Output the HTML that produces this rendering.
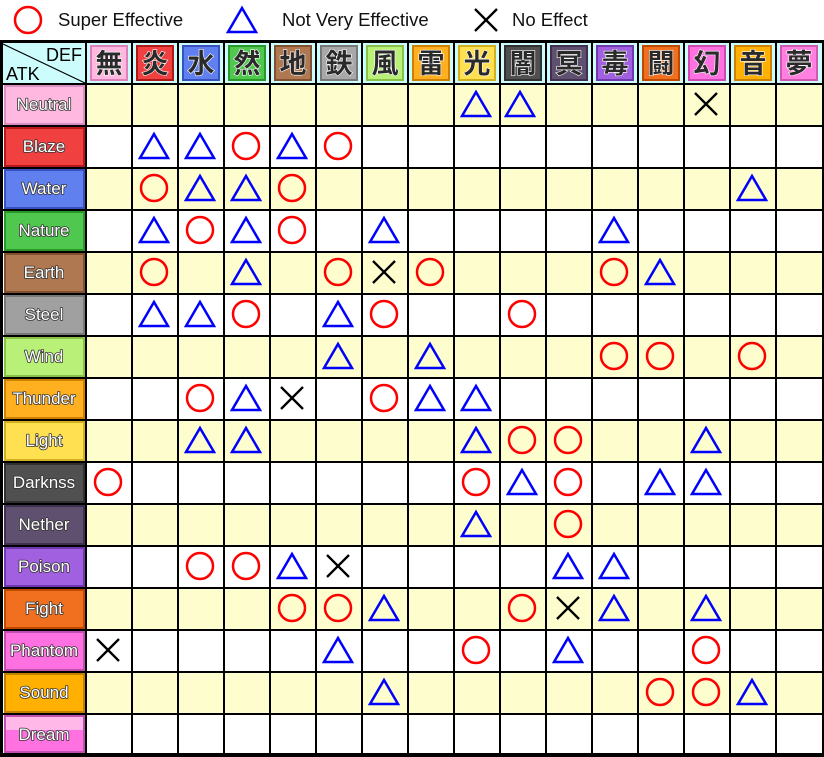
<!DOCTYPE html>
<html><head><meta charset="utf-8"><style>
html,body{margin:0;padding:0;background:#fff;width:824px;height:757px;overflow:hidden}
svg{display:block}
text{font-family:"Liberation Sans","Noto Sans CJK JP",sans-serif}
.lb{font-size:17px;fill:#fff;text-anchor:middle;stroke:#333;stroke-width:1.6;paint-order:stroke;stroke-linejoin:round}
.kj{font-family:"Noto Sans CJK JP","WenQuanYi Zen Hei",sans-serif;font-size:27px;font-weight:bold;text-anchor:middle;fill:#2a2a2a;stroke:#fff;stroke-width:1.2;paint-order:stroke}
</style></head><body>
<svg width="824" height="757" viewBox="0 0 824 757" xmlns="http://www.w3.org/2000/svg">
<defs>
<circle id="o" r="13" fill="none" stroke="#f00" stroke-width="2.5"/>
<polygon id="t" points="0,-13 14,11 -14,11" fill="none" stroke="#00f" stroke-width="2.5" stroke-linejoin="miter"/>
<g id="x" stroke="#000" stroke-width="2.3"><line x1="-11" y1="-11" x2="11" y2="11"/><line x1="11" y1="-11" x2="-11" y2="11"/></g>
</defs>
<use href="#o" x="28" y="20"/>
<text x="58" y="26" font-size="18.5" fill="#111">Super Effective</text>
<use href="#t" x="242" y="21"/>
<text x="282" y="26" font-size="18.5" fill="#111">Not Very Effective</text>
<use href="#x" x="486" y="20"/>
<text x="512" y="26" font-size="18.5" fill="#111">No Effect</text>
<rect x="0" y="40" width="824" height="717" fill="#000"/>
<rect x="3" y="43" width="819" height="710" fill="#fff"/>
<rect x="3" y="43" width="819" height="40" fill="#ccfcfc"/>
<g fill="#fdfdce">
<rect x="86" y="85" width="736" height="40"/>
<rect x="86" y="169" width="736" height="40"/>
<rect x="86" y="253" width="736" height="40"/>
<rect x="86" y="337" width="736" height="40"/>
<rect x="86" y="421" width="736" height="40"/>
<rect x="86" y="505" width="736" height="40"/>
<rect x="86" y="589" width="736" height="40"/>
<rect x="86" y="673" width="736" height="40"/>
</g>
<g fill="#000">
<rect x="3" y="83" width="819" height="2"/><rect x="3" y="125" width="819" height="2"/><rect x="3" y="167" width="819" height="2"/><rect x="3" y="209" width="819" height="2"/><rect x="3" y="251" width="819" height="2"/><rect x="3" y="293" width="819" height="2"/><rect x="3" y="335" width="819" height="2"/><rect x="3" y="377" width="819" height="2"/><rect x="3" y="419" width="819" height="2"/><rect x="3" y="461" width="819" height="2"/><rect x="3" y="503" width="819" height="2"/><rect x="3" y="545" width="819" height="2"/><rect x="3" y="587" width="819" height="2"/><rect x="3" y="629" width="819" height="2"/><rect x="3" y="671" width="819" height="2"/><rect x="3" y="713" width="819" height="2"/>
<rect x="85" y="43" width="2" height="710"/><rect x="131" y="43" width="2" height="710"/><rect x="177" y="43" width="2" height="710"/><rect x="223" y="43" width="2" height="710"/><rect x="269" y="43" width="2" height="710"/><rect x="315" y="43" width="2" height="710"/><rect x="361" y="43" width="2" height="710"/><rect x="407" y="43" width="2" height="710"/><rect x="453" y="43" width="2" height="710"/><rect x="499" y="43" width="2" height="710"/><rect x="545" y="43" width="2" height="710"/><rect x="591" y="43" width="2" height="710"/><rect x="637" y="43" width="2" height="710"/><rect x="683" y="43" width="2" height="710"/><rect x="729" y="43" width="2" height="710"/><rect x="775" y="43" width="2" height="710"/>
</g>
<line x1="3" y1="44" x2="85" y2="83" stroke="#000" stroke-width="1.2"/>
<text x="82" y="61" font-size="18" text-anchor="end" fill="#000">DEF</text>
<text x="6" y="80" font-size="18" fill="#000">ATK</text>
<g stroke-width="2">
<rect x="91" y="46" width="36" height="34" fill="#ffb8e0" stroke="#e080b8"/>
<rect x="137" y="46" width="36" height="34" fill="#f04040" stroke="#b01818"/>
<rect x="183" y="46" width="36" height="34" fill="#6080f0" stroke="#3850c0"/>
<rect x="229" y="46" width="36" height="34" fill="#50c850" stroke="#289828"/>
<rect x="275" y="46" width="36" height="34" fill="#b07850" stroke="#805030"/>
<rect x="321" y="46" width="36" height="34" fill="#a8a8a8" stroke="#787878"/>
<rect x="367" y="46" width="36" height="34" fill="#b8f078" stroke="#88c048"/>
<rect x="413" y="46" width="36" height="34" fill="#ffb020" stroke="#d08000"/>
<rect x="459" y="46" width="36" height="34" fill="#ffe050" stroke="#d0b020"/>
<rect x="505" y="46" width="36" height="34" fill="#505050" stroke="#303030"/>
<rect x="551" y="46" width="36" height="34" fill="#605070" stroke="#403050"/>
<rect x="597" y="46" width="36" height="34" fill="#a060e0" stroke="#7038b0"/>
<rect x="643" y="46" width="36" height="34" fill="#f07020" stroke="#c04800"/>
<rect x="689" y="46" width="36" height="34" fill="#ff70e0" stroke="#d048b0"/>
<rect x="735" y="46" width="36" height="34" fill="#ffb000" stroke="#d08000"/>
<rect x="781" y="46" width="36" height="34" fill="#ff80e0" stroke="#d058b0"/>
</g>
<g class="kj">
<text x="109" y="73">無</text><text x="155" y="73">炎</text><text x="201" y="73">水</text><text x="247" y="73">然</text><text x="293" y="73">地</text><text x="339" y="73">鉄</text><text x="385" y="73">風</text><text x="431" y="73">雷</text><text x="477" y="73">光</text><text x="523" y="73">闇</text><text x="569" y="73">冥</text><text x="615" y="73">毒</text><text x="661" y="73">闘</text><text x="707" y="73">幻</text><text x="753" y="73">音</text><text x="799" y="73">夢</text>
</g>
<g stroke-width="2">
<rect x="5" y="86" width="79" height="38" fill="#ffb8e0" stroke="#d890c0"/>
<rect x="5" y="128" width="79" height="38" fill="#f04040" stroke="#b81818"/>
<rect x="5" y="170" width="79" height="38" fill="#6080f0" stroke="#3850c0"/>
<rect x="5" y="212" width="79" height="38" fill="#50c850" stroke="#289828"/>
<rect x="5" y="254" width="79" height="38" fill="#b07850" stroke="#805030"/>
<rect x="5" y="296" width="79" height="38" fill="#a0a0a0" stroke="#787878"/>
<rect x="5" y="338" width="79" height="38" fill="#b8f078" stroke="#88c048"/>
<rect x="5" y="380" width="79" height="38" fill="#ffb020" stroke="#d08000"/>
<rect x="5" y="422" width="79" height="38" fill="#ffe050" stroke="#d0b020"/>
<rect x="5" y="464" width="79" height="38" fill="#505050" stroke="#303030"/>
<rect x="5" y="506" width="79" height="38" fill="#605070" stroke="#403050"/>
<rect x="5" y="548" width="79" height="38" fill="#a060e0" stroke="#7038b0"/>
<rect x="5" y="590" width="79" height="38" fill="#f07020" stroke="#c04800"/>
<rect x="5" y="632" width="79" height="38" fill="#ff70e0" stroke="#c050b0"/>
<rect x="5" y="674" width="79" height="38" fill="#ffb000" stroke="#c08000"/>
<rect x="5" y="716" width="79" height="36" fill="#ff70e0" stroke="#c050b0"/>
<rect x="6" y="717" width="77" height="13" fill="#ffb8e8" stroke="none"/>
</g>
<g class="lb">
<text x="44" y="110">Neutral</text><text x="44" y="152">Blaze</text><text x="44" y="194">Water</text><text x="44" y="236">Nature</text><text x="44" y="278">Earth</text><text x="44" y="320">Steel</text><text x="44" y="362">Wind</text><text x="44" y="404">Thunder</text><text x="44" y="446">Light</text><text x="44" y="488">Darknss</text><text x="44" y="530">Nether</text><text x="44" y="572">Poison</text><text x="44" y="614">Fight</text><text x="44" y="656">Phantom</text><text x="44" y="698">Sound</text><text x="44" y="740">Dream</text>
</g>
<use href="#t" x="476" y="105"/><use href="#t" x="520" y="105"/><use href="#x" x="706" y="104"/>
<use href="#t" x="154" y="147"/><use href="#t" x="200" y="147"/><use href="#o" x="246" y="146"/><use href="#t" x="292" y="147"/><use href="#o" x="338" y="146"/>
<use href="#o" x="154" y="188"/><use href="#t" x="200" y="189"/><use href="#t" x="246" y="189"/><use href="#o" x="292" y="188"/><use href="#t" x="752" y="189"/>
<use href="#t" x="154" y="231"/><use href="#o" x="200" y="230"/><use href="#t" x="246" y="231"/><use href="#o" x="292" y="230"/><use href="#t" x="384" y="231"/><use href="#t" x="614" y="231"/>
<use href="#o" x="154" y="272"/><use href="#t" x="246" y="273"/><use href="#o" x="338" y="272"/><use href="#x" x="384" y="272"/><use href="#o" x="430" y="272"/><use href="#o" x="614" y="272"/><use href="#t" x="660" y="273"/>
<use href="#t" x="154" y="315"/><use href="#t" x="200" y="315"/><use href="#o" x="246" y="314"/><use href="#t" x="338" y="315"/><use href="#o" x="384" y="314"/><use href="#o" x="522" y="314"/>
<use href="#t" x="338" y="357"/><use href="#t" x="430" y="357"/><use href="#o" x="614" y="356"/><use href="#o" x="660" y="356"/><use href="#o" x="752" y="356"/>
<use href="#o" x="200" y="398"/><use href="#t" x="246" y="399"/><use href="#x" x="292" y="398"/><use href="#o" x="384" y="398"/><use href="#t" x="430" y="399"/><use href="#t" x="476" y="399"/>
<use href="#t" x="200" y="441"/><use href="#t" x="246" y="441"/><use href="#t" x="476" y="441"/><use href="#o" x="522" y="440"/><use href="#o" x="568" y="440"/><use href="#t" x="706" y="441"/>
<use href="#o" x="108" y="482"/><use href="#o" x="476" y="482"/><use href="#t" x="522" y="483"/><use href="#o" x="568" y="482"/><use href="#t" x="660" y="483"/><use href="#t" x="706" y="483"/>
<use href="#t" x="476" y="525"/><use href="#o" x="568" y="524"/>
<use href="#o" x="200" y="566"/><use href="#o" x="246" y="566"/><use href="#t" x="292" y="567"/><use href="#x" x="338" y="566"/><use href="#t" x="568" y="567"/><use href="#t" x="614" y="567"/>
<use href="#o" x="292" y="608"/><use href="#o" x="338" y="608"/><use href="#t" x="384" y="609"/><use href="#o" x="522" y="608"/><use href="#x" x="568" y="608"/><use href="#t" x="614" y="609"/><use href="#t" x="706" y="609"/>
<use href="#x" x="108" y="650"/><use href="#t" x="338" y="651"/><use href="#o" x="476" y="650"/><use href="#t" x="568" y="651"/><use href="#o" x="706" y="650"/>
<use href="#t" x="384" y="693"/><use href="#o" x="660" y="692"/><use href="#o" x="706" y="692"/><use href="#t" x="752" y="693"/>
</svg>
</body></html>
